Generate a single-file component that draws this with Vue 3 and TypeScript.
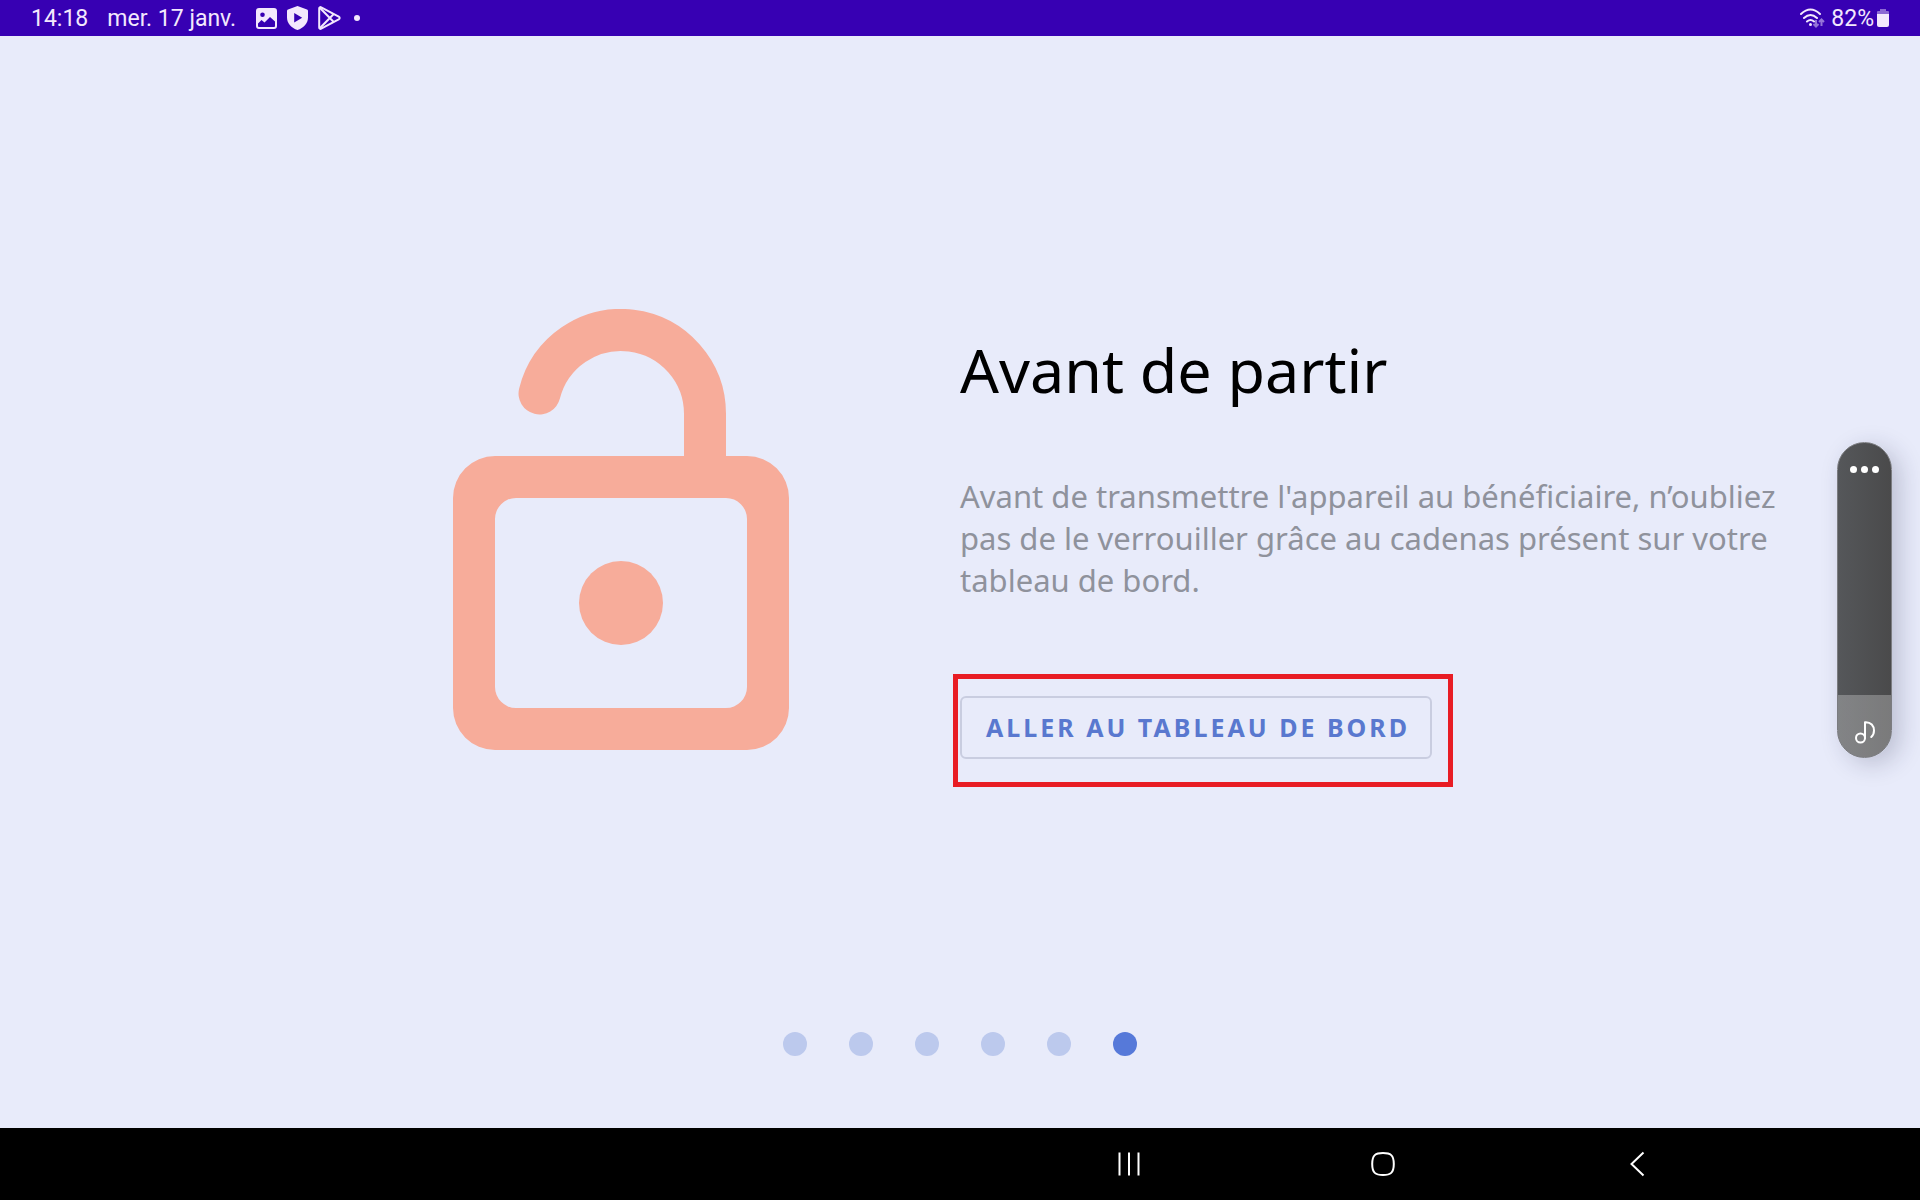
<script setup lang="ts">
import { ref } from 'vue'

const stepCount = 6
const currentStep = ref(6)
const volume = ref(20)
</script>

<template>
  <div class="screen">
    <header class="status">
      <div class="status-side">
        <span class="clock">14:18</span>
        <span class="date">mer. 17 janv.</span>
        <div class="notifications">
          <svg width="21" height="21" viewBox="0 0 21 21" aria-hidden="true">
            <path fill="currentColor" fill-rule="evenodd" d="M3 0h15a3 3 0 0 1 3 3v15a3 3 0 0 1-3 3H3a3 3 0 0 1-3-3V3a3 3 0 0 1 3-3zM6.500 4.500a2.300 2.300 0 1 0 0 4.600a2.300 2.300 0 0 0 0-4.600zM2 15.500v2.300c0 .8.4 1.200 1.200 1.200h14.600c.8 0 1.200-.4 1.200-1.200v-4.300l-5-4.500-5.500 5.500-3-2.500z" />
          </svg>
          <svg width="21" height="24" viewBox="0 0 21 24" aria-hidden="true">
            <path fill="currentColor" fill-rule="evenodd" d="M10.500 0L20 3.600q1 .4 1 1.500v6.400c0 6-4.500 10.500-10.500 12.500C4.500 22 0 17.500 0 11.500V5.100Q0 4 1 3.600zM7.200 7v9.600l8-4.800z" />
          </svg>
          <svg width="23" height="24" viewBox="0 0 23 24" fill="none" stroke="currentColor" stroke-width="2" stroke-linejoin="round" aria-hidden="true">
            <path d="M1.200 2.500c0-1.200 1-1.700 2-1.200l17.500 9.300c1.300.8 1.300 2 0 2.800L3.200 22.700c-1 .5-2 0-2-1.200z" />
            <path d="M2 2l14 14.200M2 22L16 7.800" />
          </svg>
        </div>
        <span class="more-dot"></span>
      </div>
      <div class="status-side end">
        <svg width="25" height="20" viewBox="0 0 25 20" fill="none" stroke="currentColor" stroke-width="2" aria-hidden="true">
          <path d="M1 6Q10.500 -3 20 6M4 10q6.500-6 13 0M7 13.500q3.500-3 7 0" stroke-linecap="round" />
          <circle cx="10.500" cy="16.500" r="1.500" fill="currentColor" stroke="none" />
          <path d="M16 12v6.500M13.500 16l2.500 2.500 2.500-2.500M21.500 18v-6.500M19 14l2.500-2.500 2.500 2.500" opacity=".5" />
        </svg>
        <span class="charge">82%</span>
        <svg width="12" height="18" viewBox="0 0 12 18" aria-hidden="true">
          <path fill="currentColor" opacity=".45" d="M3 0h6v2h2q1 0 1 1v3H0V3q0-1 1-1h2z" />
          <path fill="currentColor" d="M0 5h12v11q0 2-2 2H2q-2 0-2-2z" />
        </svg>
      </div>
    </header>

    <main class="page">
      <section class="intro">
        <div class="picture">
          <svg class="lock" viewBox="0 0 336 441" aria-hidden="true">
            <path class="shackle" d="M86.530 84.500A84 84 0 0 1 252 105V160" />
            <path class="body" fill-rule="evenodd" d="M42 147H294A42 42 0 0 1 336 189V399A42 42 0 0 1 294 441H42A42 42 0 0 1 0 399V189A42 42 0 0 1 42 147ZM63 189A21 21 0 0 0 42 210V378A21 21 0 0 0 63 399H273A21 21 0 0 0 294 378V210A21 21 0 0 0 273 189Z" />
            <circle class="body" cx="168" cy="294" r="42" />
          </svg>
        </div>
        <div class="copy">
          <h1>Avant de partir</h1>
          <p>Avant de transmettre l'appareil au bénéficiaire, n’oubliez pas de le verrouiller grâce au cadenas présent sur votre tableau de bord.</p>
          <div class="highlight">
            <button type="button" class="action">ALLER AU TABLEAU DE BORD</button>
          </div>
        </div>
      </section>
      <nav class="pager" aria-label="Étapes">
        <button
          v-for="step in stepCount"
          :key="step"
          type="button"
          class="dot"
          :class="{ active: step === currentStep }"
          :aria-label="`Étape ${step}`"
          @click="currentStep = step"
        ></button>
      </nav>
    </main>

    <aside class="volume">
      <input v-model.number="volume" type="range" min="0" max="100" aria-label="Volume" />
      <button type="button" class="options" aria-label="Options">
        <i></i><i></i><i></i>
      </button>
      <svg class="note" width="20" height="23" viewBox="0 0 20 23" fill="none" stroke="currentColor" stroke-width="2" stroke-linecap="round" stroke-linejoin="round" aria-hidden="true">
        <circle cx="5.500" cy="17" r="4.500" />
        <path d="M10 17V1.200c6-.5 9 4 9 8.300 0 3-1 5-2.700 6.500" />
      </svg>
    </aside>

    <footer class="system-nav">
      <button type="button" aria-label="Applications récentes">
        <svg width="26" height="26" viewBox="0 0 26 26" fill="none" stroke="currentColor" stroke-width="2">
          <path d="M3.500 1.500v23M13 1.500v23M22.500 1.500v23" />
        </svg>
      </button>
      <button type="button" aria-label="Accueil">
        <svg width="26" height="26" viewBox="0 0 26 26" fill="none" stroke="currentColor" stroke-width="2">
          <path d="M13 2c7.500 0 10.800 2 10.800 11S20.500 24 13 24 2.200 22 2.200 13 5.500 2 13 2z" />
        </svg>
      </button>
      <button type="button" aria-label="Retour">
        <svg width="26" height="26" viewBox="0 0 26 26" fill="none" stroke="currentColor" stroke-width="2">
          <path d="M19.500 1.500L7.500 13l12 11.500" />
        </svg>
      </button>
    </footer>
  </div>
</template>

<style>
body {
  margin: 0;
}
</style>

<style scoped>
.screen {
  position: relative;
  display: flex;
  flex-direction: column;
  min-height: 100vh;
  background: #e8ebfa;
  font-family: "Noto Sans", sans-serif;
}

button {
  padding: 0;
  border: 0;
  background: none;
  color: inherit;
  font: inherit;
  cursor: pointer;
}

svg {
  display: block;
  flex: none;
}

.status {
  display: flex;
  justify-content: space-between;
  align-items: center;
  height: 36px;
  padding: 0 31px;
  background: #3700b3;
  color: #f3e8fd;
  font-family: Roboto, sans-serif;
  font-size: 23px;
  line-height: 36px;
}

.status-side,
.notifications {
  display: flex;
  align-items: center;
}

.clock,
.date,
.charge {
  padding-top: 1px;
}

.date {
  margin-left: 19px;
}

.notifications {
  gap: 10px;
  margin-left: 20px;
}

.more-dot {
  width: 6px;
  height: 6px;
  margin-left: 13px;
  border-radius: 50%;
  background: currentColor;
}

.charge {
  margin: 0 3px 0 6px;
}

.page {
  display: flex;
  flex: 1;
  flex-direction: column;
}

.intro {
  display: grid;
  flex: 1;
  grid-template-columns: 1fr 1fr;
  align-items: start;
}

.picture {
  display: flex;
  justify-content: flex-end;
  padding: 273px 171px 0 0;
}

.lock {
  width: 336px;
  height: 441px;
}

.shackle {
  fill: none;
  stroke: #f7ac9a;
  stroke-width: 42;
  stroke-linecap: round;
}

.body {
  fill: #f7ac9a;
}

.copy {
  padding: 292px 140px 0 0;
}

h1 {
  margin: 0;
  color: #000;
  font-size: 61px;
  font-weight: 400;
  line-height: 84px;
}

p {
  margin: 63px 0 0;
  color: #8f929c;
  font-size: 31px;
  line-height: 42px;
}

.highlight {
  width: fit-content;
  margin: 73px 0 0 -7px;
  padding: 17px 16px 23px 2px;
  border: 5px solid #e81c24;
}

.action {
  display: block;
  box-sizing: border-box;
  height: 63px;
  padding: 0 20px 2px 24px;
  border: 2px solid #c9cde0;
  border-radius: 6px;
  color: #5978cf;
  font-size: 25px;
  font-weight: 700;
  letter-spacing: 3px;
}

.pager {
  display: flex;
  justify-content: center;
  gap: 42px;
  padding-bottom: 72px;
}

.dot {
  width: 24px;
  height: 24px;
  border-radius: 50%;
  background: #bcc9ed;
}

.dot.active {
  background: #5679d9;
}

.volume {
  position: absolute;
  top: 442px;
  right: 28px;
  width: 55px;
  height: 316px;
  color: #fff;
}

.volume input {
  display: block;
  box-sizing: border-box;
  width: 100%;
  height: 100%;
  margin: 0;
  overflow: hidden;
  border: 1px solid #7b7c80;
  border-radius: 28px;
  appearance: none;
  writing-mode: vertical-lr;
  direction: rtl;
  background:
    linear-gradient(#ffffff44, #ffffff44) bottom / 100% 62px no-repeat,
    linear-gradient(90deg, #55575a, #4a4a4b);
  box-shadow: 8px 6px 24px #20254a38;
}

.volume input::-webkit-slider-thumb {
  width: 1px;
  height: 1px;
  opacity: 0;
  appearance: none;
}

.options {
  position: absolute;
  top: 24px;
  left: 13px;
  display: flex;
  gap: 4px;
}

.options i {
  width: 7px;
  height: 7px;
  border-radius: 50%;
  background: #fff;
}

.note {
  position: absolute;
  bottom: 14px;
  left: 18px;
}

.system-nav {
  display: flex;
  justify-content: flex-end;
  align-items: center;
  gap: 228px;
  height: 72px;
  padding-right: 270px;
  background: #000;
  color: #fff;
}
</style>
